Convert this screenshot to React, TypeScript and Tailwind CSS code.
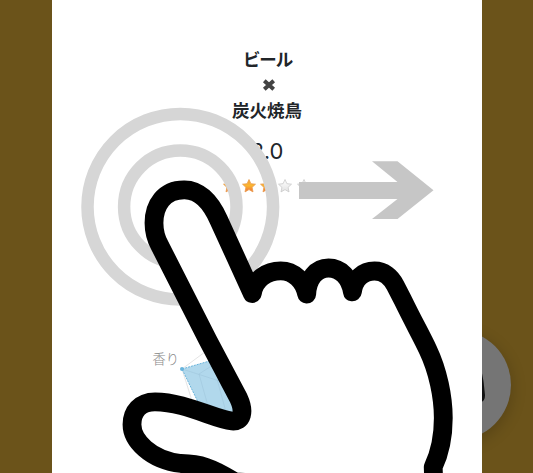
const STAR = "M7 0.5 L8.9 4.7 L13.5 5.2 L10.1 8.3 L11 12.9 L7 10.6 L3 12.9 L3.9 8.3 L0.5 5.2 L5.1 4.7 Z";

function Star({ filled }: { filled: boolean }) {
  return (
    <svg width="14" height="14" viewBox="0 0 14 14">
      <defs>
        <linearGradient id="gold" x1="0" y1="0" x2="0" y2="1">
          <stop offset="0" stopColor="#f0a038" />
          <stop offset="0.5" stopColor="#fbb62f" />
          <stop offset="1" stopColor="#ed6e38" />
        </linearGradient>
        <linearGradient id="silver" x1="0" y1="0" x2="0" y2="1">
          <stop offset="0" stopColor="#ffffff" />
          <stop offset="1" stopColor="#e2e2e2" />
        </linearGradient>
      </defs>
      <path d={STAR} fill={filled ? "url(#gold)" : "url(#silver)"} stroke={filled ? "#ea9c4b" : "#c9c9c9"} strokeWidth="0.8" strokeLinejoin="round" />
    </svg>
  );
}

function RadarChart() {
  return (
    <svg className="h-[110px] w-full" viewBox="52 340 430 110">
      <path d="M182 369 L213 360 L270 397 L245 425 L198 402 Z" fill="#b1d8ec" />
      <g fill="none" stroke="#d9d9d9" strokeWidth="0.7">
        <path d="M182 369 L213 346 M182 369 L193 404" />
      </g>
      <g fill="none" stroke="#9fc6db" strokeWidth="0.6">
        <path d="M182 369 L235 386 M199 374 L213 365 M199 374 L208 406 M217 379 L226 412" />
      </g>
      <path d="M213 360 L182 369 L198 402" fill="none" stroke="#68b4dc" strokeWidth="1" strokeDasharray="2 1" />
      <circle cx="182" cy="369" r="2" fill="#68b4dc" />
      <text x="152.5" y="364" fontSize="13.3" fontWeight="300" fill="#888" fontFamily="'Noto Sans CJK JP', sans-serif">香り</text>
    </svg>
  );
}

function SwipeGesture() {
  return (
    <svg className="pointer-events-none absolute inset-0" width="533" height="473" viewBox="0 0 533 473">
      <g fill="none" stroke="#d6d6d6" strokeWidth="12.5">
        <circle cx="180.3" cy="206.7" r="92.8" />
        <circle cx="180.3" cy="206.7" r="56.2" />
      </g>
      <path d="M299 182 H397.5 L372 161.3 H397.5 L433.5 190.2 L397.5 219 H372 L397.5 199 H299 Z" fill="#c6c6c6" />
      <path
        d="M252.3 293.5 L218.5 219.5 C210 200.5 198 189.5 184 189.8 C164 189.8 154 205 154 223 C154 231 156 239 160 246 L207.8 340 L238.5 398 C245 412 242 422 232 421 C214 419 185 402 155 401.8 C140 401.8 132 412 132 424.5 C132 440 150 460 181 463.5 C200 464 211 467 235 482 L434 490 L433.2 467 C438 457 443.3 440 443.3 418 C443.3 397 438 371 428 350 C422 337 414 323 402.8 300 L395.2 285.3 C391 277 384 271 374.5 271 C363 271 354 279 352.4 291.8 C350 278 341 268 328.5 268 C316 268 307.5 279 306.7 294.2 C304 281 294 270.8 280.7 270.8 C267 270.8 254.5 279 252.3 293.5 Z"
        fill="white"
        stroke="black"
        strokeWidth="18.8"
        strokeLinejoin="round"
        strokeLinecap="round"
      />
    </svg>
  );
}

export default function App() {
  return (
    <div className="relative flex h-[473px] w-[533px] overflow-hidden bg-[#6b531a] pl-[52px] font-['Inter','Noto_Sans_CJK_JP',sans-serif] text-[#212529]">
      <div className="absolute left-[400px] top-[329.5px] flex size-[110.5px] items-center justify-center rounded-full bg-[#757575] shadow-[0_4px_16px_rgba(0,0,0,0.2)]">
        <svg width="64" height="40" viewBox="0 0 64 40">
          <path d="M4 3 H58 Q61 16 62 30 Q62 36 58 37 H4 Z" fill="#111" />
        </svg>
      </div>
      <main className="relative flex w-[430px] flex-col items-center bg-white pt-[46px]">
        <div className="flex flex-col items-center text-[17.5px] font-bold leading-[26px]">
          <p className="relative top-px -mr-px tracking-[-1.2px]">ビール</p>
          <div className="flex h-[26px] items-center pl-1">
            <svg width="14" height="14" viewBox="0 0 14 14">
              <path d="M2.3 2.8 L11.7 11.2 M11.7 2.8 L2.3 11.2" stroke="#434343" strokeWidth="4" />
            </svg>
          </div>
          <p>炭火焼鳥</p>
        </div>
        <p className="mt-[13px] text-[22px] leading-7">3.0</p>
        <div className="mt-[14px] flex gap-[4.4px]">
          {[true, true, true, false, false].map((filled, i) => (
            <Star key={i} filled={filled} />
          ))}
        </div>
        <div className="mt-[147px] w-full">
          <RadarChart />
        </div>
      </main>
      <SwipeGesture />
    </div>
  );
}
